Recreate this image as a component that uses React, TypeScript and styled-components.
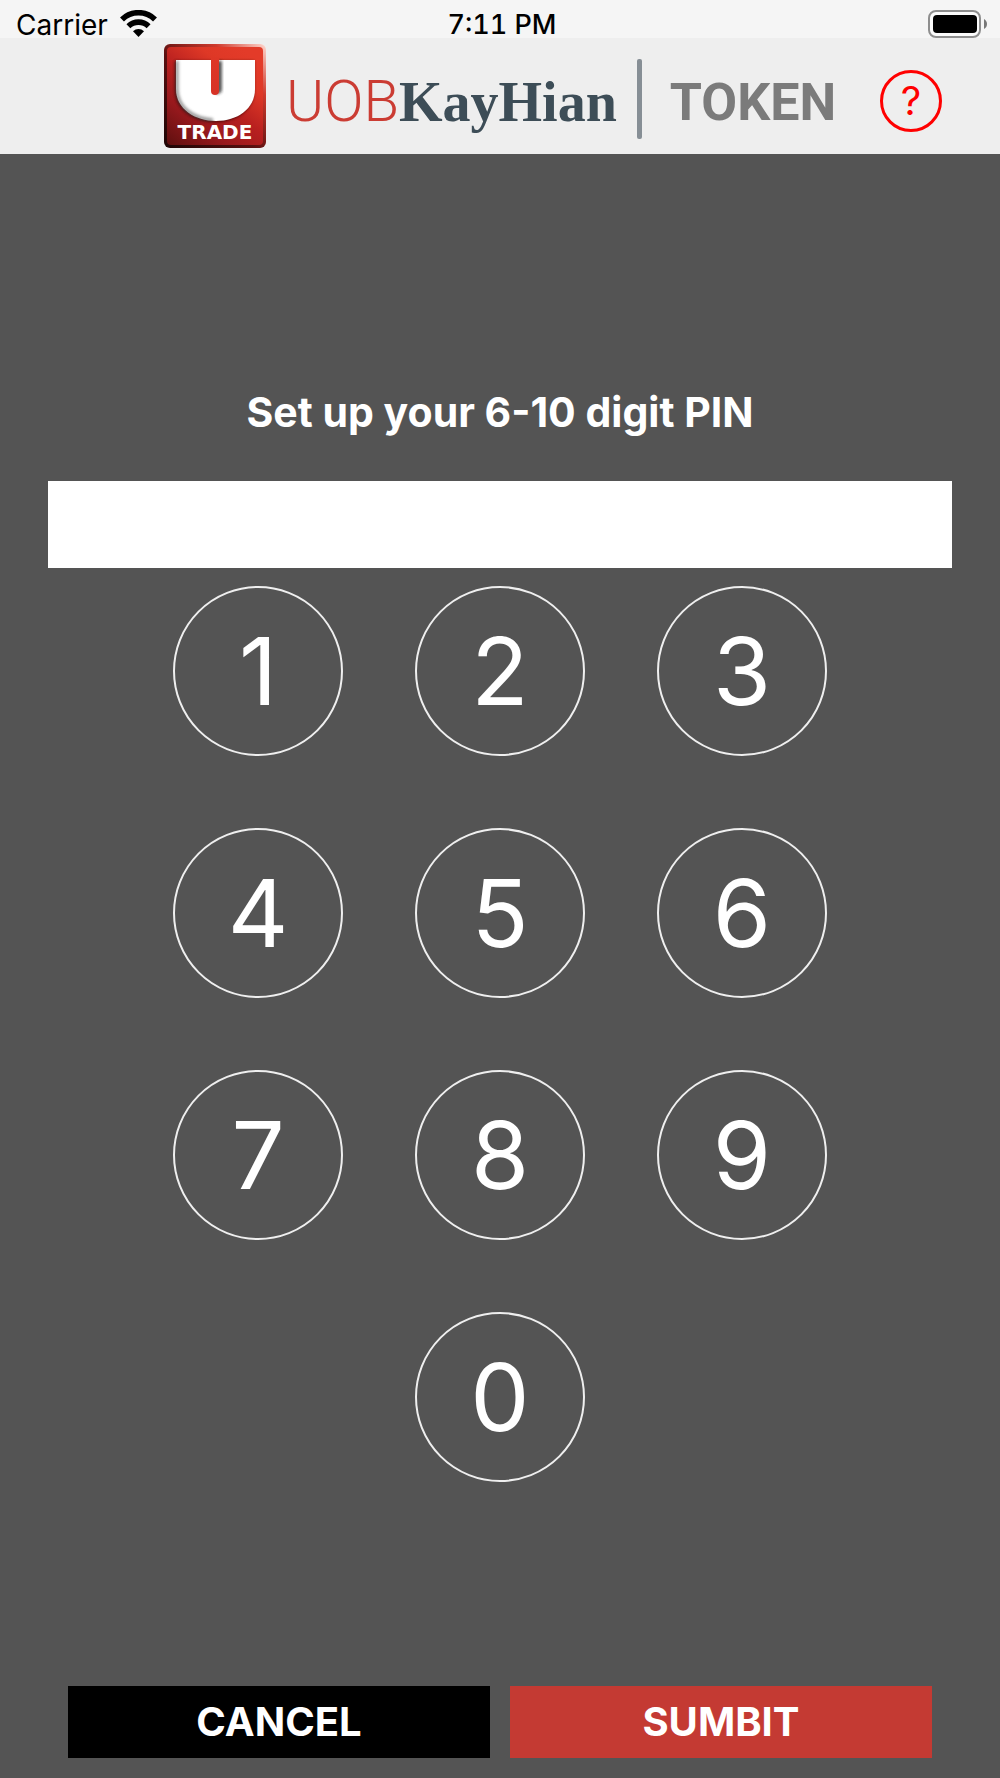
import { useState } from "react";
import styled, { createGlobalStyle } from "styled-components";

const GlobalStyle = createGlobalStyle`
  * { box-sizing: border-box; }
  body {
    margin: 0;
    background: #545454;
    font-family: Inter, "Liberation Sans", sans-serif;
  }
  button, input { font-family: inherit; }
`;

const Page = styled.div`
  display: flex;
  flex-direction: column;
  min-height: 100vh;
  background: #545454;
`;

const StatusBar = styled.div`
  display: grid;
  grid-template-columns: 1fr auto 1fr;
  height: 38px;
  padding: 10px 12px 0 16px;
  background: #f5f5f5;
  color: #000;
  font-size: 28px;
  line-height: 30px;
`;

const Carrier = styled.div`
  display: flex;
  gap: 12px;
`;

const Clock = styled.time`
  font-size: 27px;
  font-weight: 500;
  font-variant-numeric: tabular-nums;
`;

const BatterySlot = styled.div`
  display: flex;
  justify-content: flex-end;
`;

const Header = styled.header`
  display: flex;
  align-items: center;
  height: 116px;
  padding: 0 58px 0 164px;
  background: #eeeeee;
`;

const Brand = styled.div`
  display: flex;
  align-items: baseline;
  margin-left: 18px;
  padding-top: 10px;
  line-height: 64px;
  white-space: nowrap;
`;

const BrandLight = styled.span`
  font-family: Roboto, sans-serif;
  font-size: 58px;
  font-weight: 300;
  color: #cb3c33;
`;

const BrandBold = styled.span`
  font-family: "Liberation Serif", serif;
  font-size: 56px;
  font-weight: 700;
  color: #3d4d57;
`;

const Divider = styled.span`
  width: 5px;
  height: 80px;
  margin: 5px 28px 0 20px;
  border-radius: 2px;
  background: #868e95;
`;

const Product = styled.span`
  padding-top: 14px;
  font-family: Roboto, sans-serif;
  font-size: 52px;
  font-weight: 700;
  line-height: 64px;
  color: #7b7b7b;
`;

const HelpButton = styled.button`
  width: 62px;
  height: 62px;
  margin: 10px 0 0 auto;
  padding: 0;
  border: 3px solid #ff0000;
  border-radius: 50%;
  background: transparent;
  color: #ff0000;
  font-size: 40px;
  font-weight: 400;
  line-height: 56px;
`;

const PinForm = styled.form`
  display: flex;
  flex: 1;
  flex-direction: column;
  padding-top: 234px;
`;

const PinLabel = styled.label`
  color: #fff;
  font-size: 41px;
  font-weight: 700;
  line-height: 48px;
  text-align: center;
`;

const PinInput = styled.input`
  height: 87px;
  margin: 45px 48px 18px;
  padding: 0 24px;
  border: 0;
  border-radius: 0;
  background: #fff;
  color: #000;
  font-size: 40px;
  text-align: center;
`;

const Keypad = styled.div`
  display: grid;
  grid-template-columns: repeat(3, 170px);
  justify-content: center;
  gap: 72px;
`;

const Key = styled.button<{ $column?: number }>`
  grid-column: ${(p) => p.$column ?? "auto"};
  height: 170px;
  padding: 0;
  border: 2px solid #efefef;
  border-radius: 50%;
  background: transparent;
  color: #fff;
  font-size: 94px;
  line-height: 166px;
`;

const Actions = styled.div`
  display: flex;
  gap: 20px;
  margin-top: auto;
  padding: 20px 68px;
`;

const ActionButton = styled.button<{ $color: string }>`
  flex: 1;
  height: 72px;
  padding: 0;
  border: 0;
  background: ${(p) => p.$color};
  color: #fff;
  font-size: 40px;
  font-weight: 700;
  line-height: 72px;
`;

function WifiIcon() {
  return (
    <svg width="37" height="27" viewBox="0 0 37 27" aria-hidden="true">
      <g fill="none" stroke="#000" strokeWidth="5.6">
        <path d="M2 9.4a23.6 23.6 0 0 1 33 0" />
        <path d="M8.4 16.2a14.5 14.5 0 0 1 20.2 0" />
      </g>
      <path d="M13 21.2a8 8 0 0 1 11 0L18.5 27z" />
    </svg>
  );
}

function BatteryIcon() {
  return (
    <svg width="60" height="28" viewBox="0 0 60 28" aria-hidden="true">
      <rect x="1" y="1" width="51" height="26" rx="7" fill="#fbfbfb" stroke="#8e8e8e" strokeWidth="2" />
      <rect x="5" y="5" width="44" height="18" rx="4" />
      <path d="M56 9c4 2 4 8 0 10z" fill="#777" />
    </svg>
  );
}

function UTradeLogo() {
  return (
    <svg width="104" height="106" viewBox="0 0 104 106" role="img" aria-label="U Trade">
      <defs>
        <linearGradient id="face" x1="0" y1="1" x2="0.75" y2="0">
          <stop offset="0" stopColor="#5e0f0f" />
          <stop offset="0.3" stopColor="#98191d" />
          <stop offset="0.55" stopColor="#b8201f" />
          <stop offset="0.8" stopColor="#de3826" />
          <stop offset="1" stopColor="#e33b29" />
        </linearGradient>
        <linearGradient id="edge" x1="0" y1="1" x2="1" y2="0">
          <stop offset="0" stopColor="#1c0505" />
          <stop offset="0.45" stopColor="#5a1010" />
          <stop offset="0.75" stopColor="#cf3a2d" />
          <stop offset="1" stopColor="#ffd9d0" />
        </linearGradient>
        <linearGradient id="slot" x1="0" y1="0" x2="0" y2="1">
          <stop offset="0" stopColor="#de3726" />
          <stop offset="1" stopColor="#d63226" />
        </linearGradient>
        <filter id="soft" x="-20%" y="-20%" width="140%" height="140%">
          <feGaussianBlur stdDeviation="1.5" />
        </filter>
      </defs>
      <rect x="0" y="1" width="102" height="104" rx="6" fill="url(#edge)" />
      <rect x="3" y="4" width="96" height="98" rx="4" fill="url(#face)" />
      <path d="M11 18h79v29c0 20-18 32-39 32S11 67 11 47z" fill="#300808" opacity="0.8" filter="url(#soft)" />
      <path d="M12 17h79v29c0 20-18 32-39 32S12 66 12 46z" fill="#fff" />
      <path d="M13 18v28c0 19 17 30 36 31" fill="none" stroke="#444" strokeWidth="3" opacity="0.6" filter="url(#soft)" />
      <path d="M52 18h6v28c0 4-3 5-6 5z" fill="#222" opacity="0.75" filter="url(#soft)" />
      <path d="M47 14h8v34a4 4 0 0 1-8 0z" fill="url(#slot)" />
      <text
        x="51"
        y="96"
        fill="#fff"
        fontFamily="DejaVu Sans, sans-serif"
        fontSize="20"
        fontWeight="700"
        textAnchor="middle"
      >
        TRADE
      </text>
    </svg>
  );
}

const DIGITS = ["1", "2", "3", "4", "5", "6", "7", "8", "9", "0"];
const MAX_LENGTH = 10;

export default function App() {
  const [pin, setPin] = useState("");
  const update = (value: string) => setPin(value.replace(/\D/g, "").slice(0, MAX_LENGTH));

  return (
    <Page>
      <GlobalStyle />
      <StatusBar>
        <Carrier>
          <span>Carrier</span>
          <WifiIcon />
        </Carrier>
        <Clock>7:11 PM</Clock>
        <BatterySlot>
          <BatteryIcon />
        </BatterySlot>
      </StatusBar>
      <Header>
        <UTradeLogo />
        <Brand>
          <BrandLight>UOB</BrandLight>
          <BrandBold>KayHian</BrandBold>
        </Brand>
        <Divider />
        <Product>TOKEN</Product>
        <HelpButton type="button">?</HelpButton>
      </Header>
      <PinForm onSubmit={(e) => e.preventDefault()}>
        <PinLabel htmlFor="pin">Set up your 6-10 digit PIN</PinLabel>
        <PinInput
          id="pin"
          type="password"
          inputMode="numeric"
          autoComplete="new-password"
          value={pin}
          onChange={(e) => update(e.target.value)}
        />
        <Keypad>
          {DIGITS.map((digit) => (
            <Key
              key={digit}
              type="button"
              $column={digit === "0" ? 2 : undefined}
              onClick={() => update(pin + digit)}
            >
              {digit}
            </Key>
          ))}
        </Keypad>
        <Actions>
          <ActionButton type="button" $color="#000000" onClick={() => setPin("")}>
            CANCEL
          </ActionButton>
          <ActionButton type="submit" $color="#c43a33">
            SUMBIT
          </ActionButton>
        </Actions>
      </PinForm>
    </Page>
  );
}
